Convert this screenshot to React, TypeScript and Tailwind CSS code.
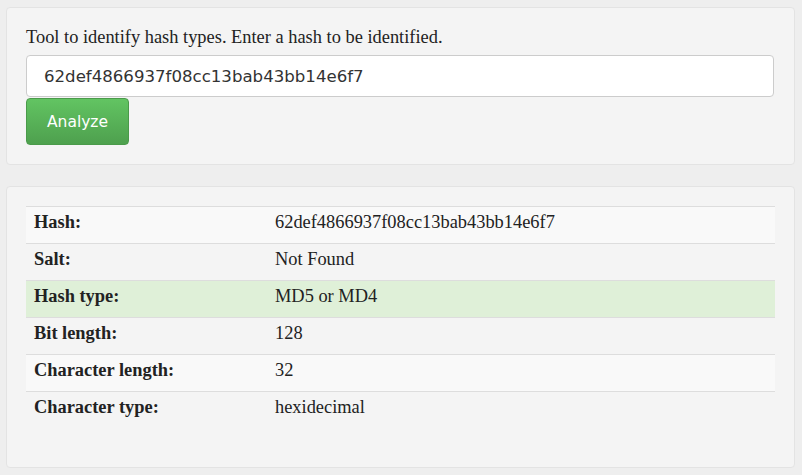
import React from 'react'

const rows = [
  { label: 'Hash:', value: '62def4866937f08cc13bab43bb14e6f7', bg: 'bg-[#f9f9f9]' },
  { label: 'Salt:', value: 'Not Found', bg: '' },
  { label: 'Hash type:', value: 'MD5 or MD4', bg: 'bg-[#dff0d8]' },
  { label: 'Bit length:', value: '128', bg: '' },
  { label: 'Character length:', value: '32', bg: 'bg-[#f9f9f9]' },
  { label: 'Character type:', value: 'hexidecimal', bg: '' },
]

export default function App() {
  return (
    <div className="min-h-[475px] bg-[#eeeeee] pt-[7px] text-[#222] [font-family:'Liberation_Serif',serif]">
      {/* Form */}
      <div className="ml-[6px] w-[789px] rounded-[4px] border border-[#e3e3e3] bg-[#f4f4f4] p-[19px]">
        <p className="mb-[8px] text-[18.4px] leading-[20px]">
          Tool to identify hash types. Enter a hash to be identified.
        </p>
        <input
          type="text"
          defaultValue="62def4866937f08cc13bab43bb14e6f7"
          className="block h-[42px] w-[748px] rounded-[4px] border border-[#cccccc] bg-white px-[17px] text-[16.6px] text-[#333] outline-none [font-family:'DejaVu_Sans',sans-serif]"
        />
        <button className="mt-px h-[47px] w-[103px] rounded-[4px] border border-[#4a9a4a] bg-gradient-to-b from-[#62c462] to-[#4ea04e] pt-[3px] text-[15.5px] text-white [font-family:'DejaVu_Sans',sans-serif]">
          Analyze
        </button>
      </div>

      {/* Result */}
      <div className="ml-[6px] mt-[21px] w-[789px] rounded-[4px] border border-[#e3e3e3] bg-[#f4f4f4] px-[19px] pt-[19px] pb-[39px]">
        <table className="w-[749px] border-collapse text-[18.4px] leading-[20px]">
          <tbody>
            {rows.map((r) => (
              <tr key={r.label} className={`border-t border-[#dddddd] ${r.bg}`}>
                <td className="w-[241px] px-[8px] pt-[5px] pb-[11px] font-bold">{r.label}</td>
                <td className="px-[8px] pt-[5px] pb-[11px]">{r.value}</td>
              </tr>
            ))}
          </tbody>
        </table>
      </div>
    </div>
  )
}
